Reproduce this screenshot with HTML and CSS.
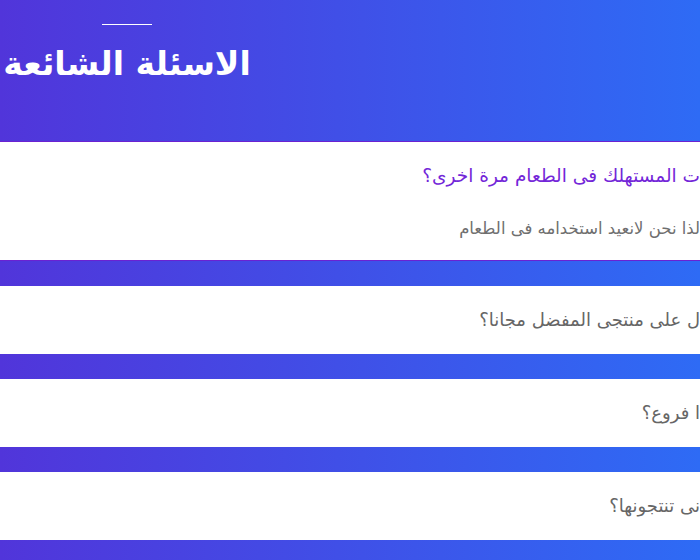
FILE: index.html
```html
<!DOCTYPE html>
<html lang="ar">
<head>
<meta charset="utf-8">
<link rel="stylesheet" href="styles.css">
</head>
<body>
<header class="hero">
  <div class="hero-inner">
    <span class="hero-line"></span>
    <h1 class="hero-title">الاسئلة الشائعة</h1>
  </div>
</header>
<main class="faq">
  <section class="card card-open">
    <p class="question question-active">ت المستهلك فى الطعام مرة اخرى؟</p>
    <p class="answer">لذا نحن لانعيد استخدامه فى الطعام</p>
  </section>
  <section class="card">
    <p class="question">ل على منتجى المفضل مجانا؟</p>
  </section>
  <section class="card">
    <p class="question">ا فروع؟</p>
  </section>
  <section class="card">
    <p class="question">نى تنتجونها؟</p>
  </section>
</main>
</body>
</html>
```
FILE: styles.css
```css
html, body {
  margin: 0;
  padding: 0;
}
body {
  width: 700px;
  height: 560px;
  overflow: hidden;
  background: linear-gradient(to right, #5135da, #2e6bf5);
  font-family: "DejaVu Sans", sans-serif;
}
.hero {
  height: 141px;
}
.hero-inner {
  width: 254px;
  display: flex;
  flex-direction: column;
  align-items: center;
  padding-top: 24px;
}
.hero-line {
  display: block;
  width: 50px;
  height: 1px;
  background: #ffffff;
}
.hero-title {
  margin: 16px 0 0;
  direction: rtl;
  color: #ffffff;
  font-size: 33px;
  font-weight: bold;
  line-height: 46px;
  white-space: nowrap;
}
.faq {
  display: flex;
  flex-direction: column;
  gap: 25px;
}
.card {
  background: #ffffff;
  height: 68px;
  display: flex;
  flex-direction: column;
  justify-content: center;
  align-items: flex-end;
}
.card-open {
  height: 118px;
  border-top: 1px solid #6a22d2;
  border-bottom: 1px solid #6a22d2;
  justify-content: flex-start;
}
.question {
  margin: 0;
  direction: rtl;
  white-space: nowrap;
  color: #666666;
  font-size: 18px;
  line-height: 24px;
}
.question-active {
  color: #7326d8;
  font-size: 18.5px;
  margin-top: 22px;
}
.answer {
  margin: 31px 0 0;
  direction: rtl;
  white-space: nowrap;
  color: #6f6f6f;
  font-size: 16.5px;
  line-height: 20px;
}
```
